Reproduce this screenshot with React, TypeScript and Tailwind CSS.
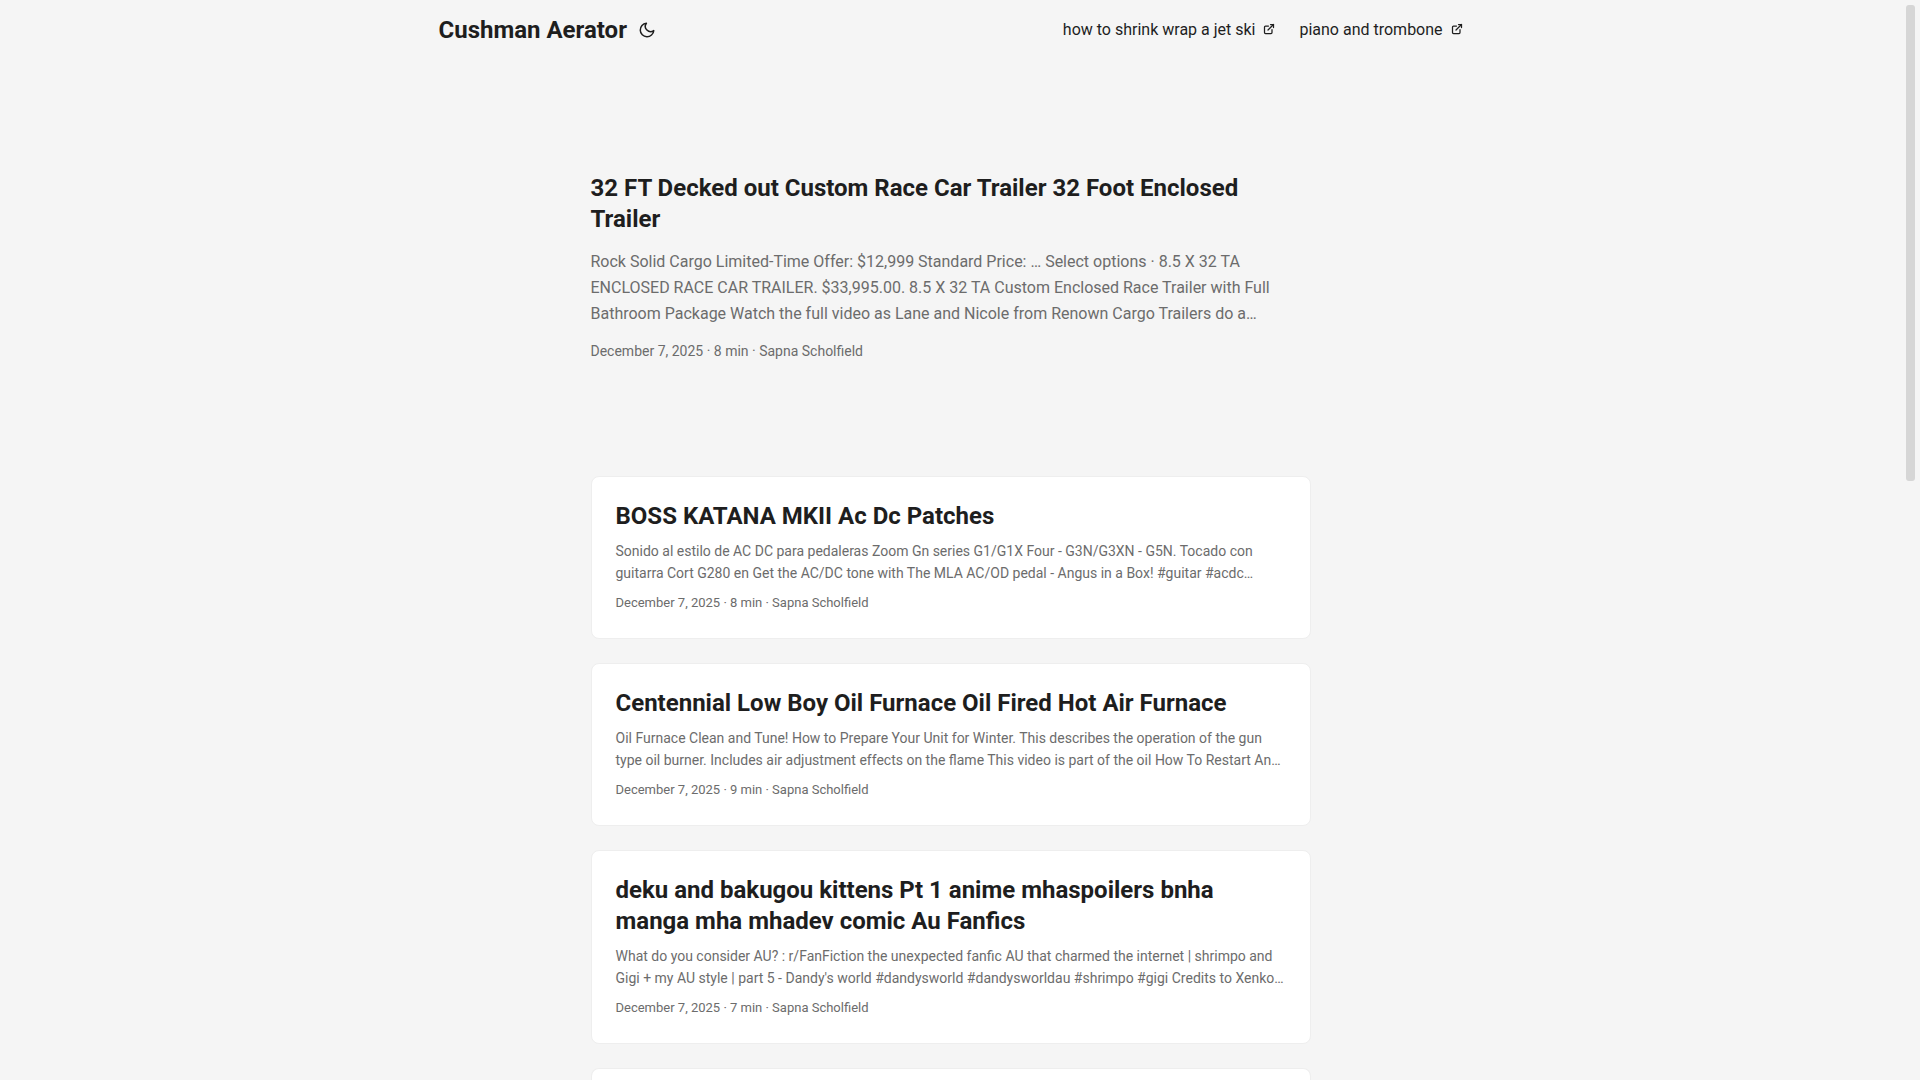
import { useState } from 'react';

type Post = { title: string; summary: string; minutes: number };

const AUTHOR = 'Sapna Scholfield';
const DATE = 'December 7, 2025';

const links = ['how to shrink wrap a jet ski', 'piano and trombone'];

const featured: Post = {
  title: '32 FT Decked out Custom Race Car Trailer 32 Foot Enclosed Trailer',
  summary: 'Rock Solid Cargo Limited-Time Offer: $12,999 Standard Price: … Select options · 8.5 X 32 TA ENCLOSED RACE CAR TRAILER. $33,995.00. 8.5 X 32 TA Custom Enclosed Race Trailer with Full Bathroom Package Watch the full video as Lane and Nicole from Renown Cargo Trailers do a…',
  minutes: 8
};

const posts: Post[] = [
  {
    title: 'BOSS KATANA MKII Ac Dc Patches',
    summary: 'Sonido al estilo de AC DC para pedaleras Zoom Gn series G1/G1X Four - G3N/G3XN - G5N. Tocado con guitarra Cort G280 en Get the AC/DC tone with The MLA AC/OD pedal - Angus in a Box! #guitar #acdc…',
    minutes: 8
  },
  {
    title: 'Centennial Low Boy Oil Furnace Oil Fired Hot Air Furnace',
    summary: 'Oil Furnace Clean and Tune! How to Prepare Your Unit for Winter. This describes the operation of the gun type oil burner. Includes air adjustment effects on the flame This video is part of the oil How To Restart An…',
    minutes: 9
  },
  {
    title: 'deku and bakugou kittens Pt 1 anime mhaspoilers bnha manga mha mhadev comic Au Fanfics',
    summary: "What do you consider AU? : r/FanFiction the unexpected fanfic AU that charmed the internet | shrimpo and Gigi + my AU style | part 5 - Dandy's world #dandysworld #dandysworldau #shrimpo #gigi Credits to Xenko…",
    minutes: 7
  }
];

function meta(post: Post) {
  return `${DATE} · ${post.minutes} min · ${AUTHOR}`;
}

function MoonIcon() {
  return <svg width="24" height="18" viewBox="0 0 24 24" fill="none" stroke="currentColor" strokeWidth="2" strokeLinecap="round" strokeLinejoin="round" aria-hidden="true">
    <path d="M21 12.79A9 9 0 1 1 11.21 3 7 7 0 0 0 21 12.79z" />
  </svg>;
}

function ExternalIcon() {
  return <svg className="inline align-baseline" width="12" height="12" viewBox="0 0 24 24" fill="none" stroke="currentColor" strokeWidth="2.5" strokeLinecap="round" strokeLinejoin="round" aria-hidden="true">
    <path d="M18 13v6a2 2 0 0 1-2 2H5a2 2 0 0 1-2-2V8a2 2 0 0 1 2-2h6" />
    <path d="M15 3h6v6" />
    <path d="M10 14L21 3" />
  </svg>;
}

function PostCard({ post }: { post: Post }) {
  return <article className="mb-6 rounded-lg border border-[#eeeeee] bg-white px-6 pt-6 pb-[25px]">
    <h2 className="text-2xl/[31px] font-bold"><a href="#">{post.title}</a></h2>
    <p className="mt-2 text-sm/[22px] text-[#6c6c6c]">{post.summary}</p>
    <footer className="mt-2 text-[13px]/[21px] text-[#6c6c6c]">{meta(post)}</footer>
  </article>;
}

export default function App() {
  const [pressed, setPressed] = useState(false);

  return <div className="flex h-screen bg-[#f5f5f5] font-['Roboto',sans-serif] text-[#1e1e1e]">
    <div className="min-w-0 flex-1 overflow-y-auto [scrollbar-width:none]">
      <header className="mx-auto flex max-w-[1072px] flex-wrap justify-between px-6">
        <div className="flex h-[60px] items-center">
          <a href="#" className="text-2xl font-bold">Cushman Aerator</a>
          <button type="button" aria-label="Toggle theme" aria-pressed={pressed} onClick={() => setPressed(current => !current)} className="ml-2"><MoonIcon /></button>
        </div>
        <nav className="flex h-[60px] items-center gap-6">
          {links.map(link => <a key={link} href="#" className="text-base">{link}&nbsp; <ExternalIcon /></a>)}
        </nav>
      </header>

      <main className="mx-auto max-w-[768px] px-6 pt-6">
        <article className="mt-6 mb-12 flex min-h-[320px] flex-col justify-center">
          <h1 className="text-2xl/[31px] font-bold"><a href="#">{featured.title}</a></h1>
          <p className="mt-[14px] mb-3 text-base/[26px] text-[#6c6c6c]">{featured.summary}</p>
          <footer className="text-sm/[24px] text-[#6c6c6c]">{meta(featured)}</footer>
        </article>
        {posts.map(post => <PostCard key={post.title} post={post} />)}
        <div className="h-40 rounded-t-lg border border-b-0 border-[#eeeeee] bg-white" />
      </main>
    </div>

    <div className="w-[19px] shrink-0 p-[5px]" aria-hidden="true">
      <div className="h-[476px] w-[9px] rounded-[3px] bg-[#d6d6d6]" />
    </div>
  </div>;
}
